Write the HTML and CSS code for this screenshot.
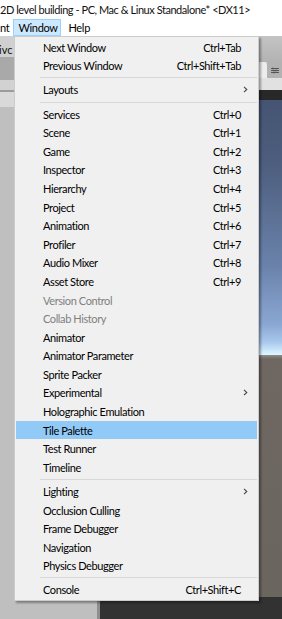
FILE: index.html
```html
<!DOCTYPE html>
<html>
<head>
<meta charset="utf-8">
<link rel="stylesheet" href="styles.css">
</head>
<body>
<div class="screen">
  <div class="titlebar">2D level building - PC, Mac &amp; Linux Standalone* &lt;DX11&gt;</div>
  <div class="menubar">
    <span class="mb-item mb-cut">nt</span>
    <span class="mb-item mb-active">Window</span>
    <span class="mb-item">Help</span>
  </div>
  <div class="workspace">
    <div class="leftpane">
      <div class="lp-toolbar"><span class="lp-text">ivc</span></div>
      <div class="lp-band-dark"></div>
      <div class="lp-band-light"></div>
      <div class="lp-line"></div>
      <div class="lp-band-light2"></div>
      <div class="lp-body"></div>
    </div>
    <div class="divider"></div>
    <div class="rightpane">
      <div class="rp-toolbar"></div>
      <div class="rp-tabrow">
        <div class="rp-tabspace"></div>
        <div class="rp-tab"></div>
        <div class="rp-icon">
          <svg width="8" height="7" viewBox="0 0 8 7"><path d="M0 1.5H8M0 3.5H8M0 5.5H8" stroke="#555" stroke-width="1"/><path d="M2 0.5V2.5M5 2.5V4.5M3 4.5V6.5" stroke="#555" stroke-width="1"/></svg>
        </div>
      </div>
      <div class="rp-strip"></div>
      <div class="rp-dark"></div>
      <div class="rp-sky"></div>
      <div class="rp-ground"></div>
      <div class="rp-bottom"></div>
    </div>
  </div>

  <div class="menu">
    <div class="mi"><span class="lbl">Next Window</span><span class="sc">Ctrl+Tab</span></div>
    <div class="mi"><span class="lbl">Previous Window</span><span class="sc">Ctrl+Shift+Tab</span></div>
    <div class="sep"></div>
    <div class="mi"><span class="lbl">Layouts</span><span class="arrow"><svg width="5" height="7" viewBox="0 0 5 7"><path d="M1 0.8L3.8 3.5L1 6.2" fill="none" stroke="#444" stroke-width="1.1"/></svg></span></div>
    <div class="sep"></div>
    <div class="mi"><span class="lbl">Services</span><span class="sc">Ctrl+0</span></div>
    <div class="mi"><span class="lbl">Scene</span><span class="sc">Ctrl+1</span></div>
    <div class="mi"><span class="lbl">Game</span><span class="sc">Ctrl+2</span></div>
    <div class="mi"><span class="lbl">Inspector</span><span class="sc">Ctrl+3</span></div>
    <div class="mi"><span class="lbl">Hierarchy</span><span class="sc">Ctrl+4</span></div>
    <div class="mi"><span class="lbl">Project</span><span class="sc">Ctrl+5</span></div>
    <div class="mi"><span class="lbl">Animation</span><span class="sc">Ctrl+6</span></div>
    <div class="mi"><span class="lbl">Profiler</span><span class="sc">Ctrl+7</span></div>
    <div class="mi"><span class="lbl">Audio Mixer</span><span class="sc">Ctrl+8</span></div>
    <div class="mi"><span class="lbl">Asset Store</span><span class="sc">Ctrl+9</span></div>
    <div class="mi disabled"><span class="lbl">Version Control</span></div>
    <div class="mi disabled"><span class="lbl">Collab History</span></div>
    <div class="mi"><span class="lbl">Animator</span></div>
    <div class="mi"><span class="lbl">Animator Parameter</span></div>
    <div class="mi"><span class="lbl">Sprite Packer</span></div>
    <div class="mi"><span class="lbl">Experimental</span><span class="arrow"><svg width="5" height="7" viewBox="0 0 5 7"><path d="M1 0.8L3.8 3.5L1 6.2" fill="none" stroke="#444" stroke-width="1.1"/></svg></span></div>
    <div class="mi"><span class="lbl">Holographic Emulation</span></div>
    <div class="mi hot"><span class="lbl">Tile Palette</span></div>
    <div class="mi"><span class="lbl">Test Runner</span></div>
    <div class="mi"><span class="lbl">Timeline</span></div>
    <div class="sep"></div>
    <div class="mi"><span class="lbl">Lighting</span><span class="arrow"><svg width="5" height="7" viewBox="0 0 5 7"><path d="M1 0.8L3.8 3.5L1 6.2" fill="none" stroke="#444" stroke-width="1.1"/></svg></span></div>
    <div class="mi"><span class="lbl">Occlusion Culling</span></div>
    <div class="mi"><span class="lbl">Frame Debugger</span></div>
    <div class="mi"><span class="lbl">Navigation</span></div>
    <div class="mi"><span class="lbl">Physics Debugger</span></div>
    <div class="sep"></div>
    <div class="mi"><span class="lbl">Console</span><span class="sc">Ctrl+Shift+C</span></div>
  </div>
</div>
</body>
</html>
```

FILE: styles.css
```css
html, body {
  margin: 0;
  padding: 0;
}
body {
  width: 282px;
  height: 619px;
  overflow: hidden;
  font-family: Lato, "Open Sans", sans-serif;
  background: #c0c0c0;
}
.screen {
  position: relative;
  width: 282px;
  height: 619px;
  display: flex;
  flex-direction: column;
}
.titlebar {
  height: 19px;
  line-height: 20px;
  background: #ffffff;
  font-size: 11px;
  letter-spacing: -0.45px;
  color: #111;
  white-space: nowrap;
  padding-left: 0;
}
.menubar {
  height: 17px;
  background: #ffffff;
  display: flex;
  align-items: stretch;
  font-size: 11px;
  letter-spacing: -0.3px;
  color: #000;
}
.mb-item {
  display: flex;
  align-items: center;
  padding: 0 6px;
  box-sizing: border-box;
  border: 1px solid transparent;
}
.mb-cut {
  padding: 0 3px 0 0;
  margin-left: -1px;
}
.mb-active {
  background: #cce8ff;
  border-color: #99d1ff;
  width: 48px;
  padding: 0 4px;
}
.workspace {
  flex: 1;
  display: flex;
  min-height: 0;
}
.leftpane {
  width: 97px;
  display: flex;
  flex-direction: column;
  background: #c3c3c3;
}
.lp-toolbar {
  height: 21px;
  background: #d0d0d0;
  font-size: 11px;
  display: flex;
  align-items: center;
  padding-top: 6px;
  box-sizing: border-box;
}
.lp-text {
  margin-left: -1px;
  color: #111;
}
.lp-band-dark { height: 23px; background: #a9a9a9; }
.lp-band-light { height: 10px; background: #d2d2d2; }
.lp-line { height: 2px; background: #9c9c9c; }
.lp-band-light2 { height: 15px; background: #d9d9d9; }
.lp-body { flex: 1; background: #bfbfbf; }
.divider {
  width: 3px;
  background: #8e8e8e;
}
.rightpane {
  flex: 1;
  display: flex;
  flex-direction: column;
}
.rp-toolbar {
  height: 26px;
  background: linear-gradient(#c4c4c4, #b2b2b2);
}
.rp-tabrow {
  height: 16px;
  display: flex;
  background: #b2b2b2;
}
.rp-tabspace { flex: 1; }
.rp-tab {
  width: 9px;
  background: #ededed;
  border-top-right-radius: 2px;
}
.rp-icon {
  width: 15px;
  display: flex;
  align-items: center;
  justify-content: center;
}
.rp-strip { height: 12px; background: #e1e1e1; }
.rp-dark { height: 10px; background: #282828; }
.rp-sky {
  height: 255px;
  background: linear-gradient(#455472 0%, #4d5e7e 25%, #6a82aa 65%, #8aa7d3 88%, #a9c8ec 95%, #dff8ff 100%);
}
.rp-ground {
  height: 242px;
  background: linear-gradient(#8f8d8a 0px, #6e6762 4px, #6b6560 100%);
}
.rp-bottom {
  flex: 1;
  background: #323232;
}

/* dropdown menu */
.menu {
  position: absolute;
  left: 14px;
  top: 36px;
  width: 245px;
  box-sizing: border-box;
  background: #f0f0f0;
  border: 1px solid #cccccc;
  padding: 1px;
  box-shadow: 2px 2px 2px rgba(0, 0, 0, 0.35);
  font-size: 11px;
  letter-spacing: -0.4px;
  color: #000;
}
.mi {
  height: 18.6px;
  display: flex;
  align-items: center;
  padding-left: 27px;
  padding-right: 16px;
  white-space: nowrap;
}
.mi .lbl { flex: 1; }
.mi .sc { text-align: right; }
.mi .arrow {
  display: flex;
  align-items: center;
  margin-right: -7px;
}
.mi.disabled { color: #7f7f7f; }
.mi.hot { background: #91c9f7; }
.sep {
  height: 1px;
  background: #d7d7d7;
  margin: 2.25px 0 2.25px 24px;
}
```
